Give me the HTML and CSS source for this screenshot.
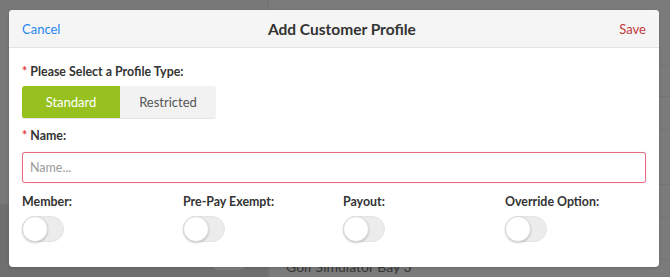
FILE: index.html
```html
<!DOCTYPE html>
<html>
<head>
<meta charset="utf-8">
<link rel="stylesheet" href="styles.css">
</head>
<body>
<div class="page">
  <div class="side">
    <div class="side-top"></div>
    <div class="side-bottom"><span class="ghost-btn"></span></div>
  </div>
  <div class="list">
    <div class="row r1"></div>
    <div class="row r2"></div>
    <div class="row r3"></div>
    <div class="row r4"></div>
    <div class="row r5"></div>
    <div class="row r6"></div>
    <div class="row last">Golf Simulator Bay 3</div>
  </div>
</div>

<div class="modal">
  <div class="modal-header">
    <span class="link cancel">Cancel</span>
    <span class="title">Add Customer Profile</span>
    <span class="link save">Save</span>
  </div>
  <div class="modal-body">
    <div class="label"><span class="req">*</span> Please Select a Profile Type:</div>
    <div class="segmented">
      <span class="seg active">Standard</span>
      <span class="seg">Restricted</span>
    </div>
    <div class="label name-label"><span class="req">*</span> Name:</div>
    <input class="text-input" type="text" placeholder="Name...">
    <div class="options">
      <div class="option">
        <div class="label">Member:</div>
        <span class="toggle"><span class="knob"></span></span>
      </div>
      <div class="option">
        <div class="label">Pre-Pay Exempt:</div>
        <span class="toggle"><span class="knob"></span></span>
      </div>
      <div class="option">
        <div class="label">Payout:</div>
        <span class="toggle"><span class="knob"></span></span>
      </div>
      <div class="option">
        <div class="label">Override Option:</div>
        <span class="toggle"><span class="knob"></span></span>
      </div>
    </div>
  </div>
</div>
</body>
</html>
```

FILE: styles.css
```css
* { box-sizing: border-box; }
html, body {
  margin: 0;
  padding: 0;
  width: 670px;
  height: 277px;
  overflow: hidden;
  font-family: Lato, "Open Sans", sans-serif;
}
body {
  background: #777777;
  position: relative;
}

/* background page (dimmed by overlay) */
.page {
  display: grid;
  grid-template-columns: 268px 1fr;
  height: 277px;
}
.side {
  display: flex;
  flex-direction: column;
  background: #787878;
}
.side-top {
  height: 205px;
  border-bottom: 1px solid #707070;
}
.side-bottom {
  flex: 1;
  background: #6f6f6f;
  display: flex;
  align-items: flex-end;
  padding: 0 0 7px 213px;
}
.ghost-btn {
  width: 32px;
  height: 12px;
  background: #7d7d7d;
  border-radius: 0 0 5px 5px;
}
.list {
  display: flex;
  flex-direction: column;
  background: #7b7b7b;
  border-left: 1px solid #727272;
}
.row { border-bottom: 1px solid #737373; }
.r1 { height: 66px; }
.r2 { height: 31px; }
.r3 { height: 33px; }
.r4 { height: 55px; }
.r5 { height: 33px; }
.r6 { height: 42px; }
.row.last {
  border: 0;
  flex: 1;
  padding-left: 17px;
  font-size: 14px;
  color: #363636;
  line-height: 14px;
}

/* modal */
.modal {
  position: absolute;
  left: 9px;
  top: 10px;
  width: 650px;
  height: 257px;
  background: #ffffff;
  border-radius: 4px;
  overflow: hidden;
  box-shadow: 0 1px 3px rgba(0,0,0,0.15);
}
.modal-header {
  height: 38px;
  background: #f5f5f5;
  border-bottom: 1px solid #e2e2e2;
  display: flex;
  align-items: center;
  justify-content: space-between;
  padding: 0 13px;
}
.link { font-size: 13px; }
.cancel { color: #1f86f0; }
.save { color: #c2393b; }
.title {
  font-size: 15.5px;
  font-weight: 700;
  color: #333333;
  padding-left: 4px;
}

.modal-body {
  padding: 17px 13px 0 13px;
}
.label {
  font-size: 12.4px;
  font-weight: 700;
  color: #333333;
  line-height: 14px;
}
.req { color: #e0403f; }

.segmented {
  display: flex;
  width: 194px;
  height: 33px;
  margin-top: 7px;
  border-radius: 3px;
  overflow: hidden;
  background: #f2f2f2;
  border-bottom: 1px solid #e6e6e6;
}
.seg {
  flex: 0 0 96px;
  display: flex;
  align-items: center;
  justify-content: center;
  font-size: 13px;
  color: #555555;
}
.seg.active {
  flex-basis: 98px;
  background: #97c11f;
  color: #ffffff;
}

.name-label { margin-top: 10px; }

.text-input {
  display: block;
  width: 624px;
  height: 31px;
  margin-top: 9px;
  border: 1px solid #e96a80;
  border-radius: 3px;
  box-shadow: 0 0 1px rgba(233,106,128,0.6);
  padding: 0 7px;
  font-family: Lato, sans-serif;
  font-size: 12.5px;
  color: #333;
  outline: none;
}
.text-input::placeholder { color: #9a9a9a; }

.options {
  display: grid;
  grid-template-columns: 161px 160px 162px 1fr;
  margin-top: 12px;
}
.option .label { margin-bottom: 7px; }
.toggle {
  display: block;
  width: 42px;
  height: 26px;
  border-radius: 13px;
  background: #ececec;
  border: 1px solid #e3e3e3;
  position: relative;
}
.knob {
  position: absolute;
  left: -1px;
  top: -1px;
  width: 26px;
  height: 26px;
  border-radius: 50%;
  background: #ffffff;
  border: 1px solid #dadada;
  box-shadow: 0 1px 2px rgba(0,0,0,0.2);
}
```
